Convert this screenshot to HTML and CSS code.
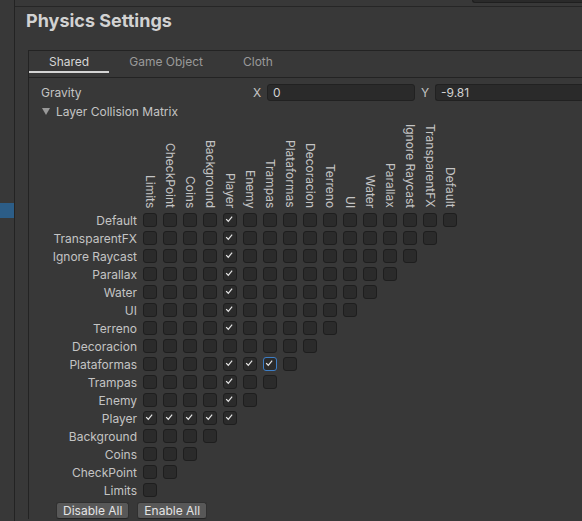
FILE: index.html
```html
<!DOCTYPE html>
<html>
<head>
<meta charset="utf-8">
<link rel="stylesheet" href="styles.css">
</head>
<body>
<div class="app">
  <aside class="sidebar"><div class="sel"></div></aside>
  <main class="main">
    <div class="topbar"><div class="search"></div></div>
    <h1 class="title">Physics Settings</h1>
    <section class="panel">
      <nav class="tabs">
        <div class="tab active">Shared</div>
        <div class="tab">Game Object</div>
        <div class="tab">Cloth</div>
      </nav>
      <div class="content">
        <div class="prop">
          <span class="label">Gravity</span>
          <span class="axis">X</span><span class="field">0</span>
          <span class="axis ay">Y</span><span class="field grow">-9.81</span>
        </div>
        <div class="foldout"><span class="tri"></span>Layer Collision Matrix</div>
        <div class="matrix">
          <div class="mrow head">
            <div class="rl"></div>
            <div class="ch">Limits</div><div class="ch">CheckPoint</div><div class="ch">Coins</div><div class="ch">Background</div><div class="ch">Player</div><div class="ch">Enemy</div><div class="ch">Trampas</div><div class="ch">Plataformas</div><div class="ch">Decoracion</div><div class="ch">Terreno</div><div class="ch">UI</div><div class="ch">Water</div><div class="ch">Parallax</div><div class="ch">Ignore Raycast</div><div class="ch">TransparentFX</div><div class="ch">Default</div>
          </div>
          <div class="mrow"><div class="rl">Default</div><i class="cb"></i><i class="cb"></i><i class="cb"></i><i class="cb"></i><i class="cb on"><svg viewBox="0 0 14 14"><path d="M3.5 7l2.5 2.5 4.5-5.5"/></svg></i><i class="cb"></i><i class="cb"></i><i class="cb"></i><i class="cb"></i><i class="cb"></i><i class="cb"></i><i class="cb"></i><i class="cb"></i><i class="cb"></i><i class="cb"></i><i class="cb"></i></div>
          <div class="mrow"><div class="rl">TransparentFX</div><i class="cb"></i><i class="cb"></i><i class="cb"></i><i class="cb"></i><i class="cb on"><svg viewBox="0 0 14 14"><path d="M3.5 7l2.5 2.5 4.5-5.5"/></svg></i><i class="cb"></i><i class="cb"></i><i class="cb"></i><i class="cb"></i><i class="cb"></i><i class="cb"></i><i class="cb"></i><i class="cb"></i><i class="cb"></i><i class="cb"></i></div>
          <div class="mrow"><div class="rl">Ignore Raycast</div><i class="cb"></i><i class="cb"></i><i class="cb"></i><i class="cb"></i><i class="cb on"><svg viewBox="0 0 14 14"><path d="M3.5 7l2.5 2.5 4.5-5.5"/></svg></i><i class="cb"></i><i class="cb"></i><i class="cb"></i><i class="cb"></i><i class="cb"></i><i class="cb"></i><i class="cb"></i><i class="cb"></i><i class="cb"></i></div>
          <div class="mrow"><div class="rl">Parallax</div><i class="cb"></i><i class="cb"></i><i class="cb"></i><i class="cb"></i><i class="cb on"><svg viewBox="0 0 14 14"><path d="M3.5 7l2.5 2.5 4.5-5.5"/></svg></i><i class="cb"></i><i class="cb"></i><i class="cb"></i><i class="cb"></i><i class="cb"></i><i class="cb"></i><i class="cb"></i><i class="cb"></i></div>
          <div class="mrow"><div class="rl">Water</div><i class="cb"></i><i class="cb"></i><i class="cb"></i><i class="cb"></i><i class="cb on"><svg viewBox="0 0 14 14"><path d="M3.5 7l2.5 2.5 4.5-5.5"/></svg></i><i class="cb"></i><i class="cb"></i><i class="cb"></i><i class="cb"></i><i class="cb"></i><i class="cb"></i><i class="cb"></i></div>
          <div class="mrow"><div class="rl">UI</div><i class="cb"></i><i class="cb"></i><i class="cb"></i><i class="cb"></i><i class="cb on"><svg viewBox="0 0 14 14"><path d="M3.5 7l2.5 2.5 4.5-5.5"/></svg></i><i class="cb"></i><i class="cb"></i><i class="cb"></i><i class="cb"></i><i class="cb"></i><i class="cb"></i></div>
          <div class="mrow"><div class="rl">Terreno</div><i class="cb"></i><i class="cb"></i><i class="cb"></i><i class="cb"></i><i class="cb on"><svg viewBox="0 0 14 14"><path d="M3.5 7l2.5 2.5 4.5-5.5"/></svg></i><i class="cb"></i><i class="cb"></i><i class="cb"></i><i class="cb"></i><i class="cb"></i></div>
          <div class="mrow"><div class="rl">Decoracion</div><i class="cb"></i><i class="cb"></i><i class="cb"></i><i class="cb"></i><i class="cb"></i><i class="cb"></i><i class="cb"></i><i class="cb"></i><i class="cb"></i></div>
          <div class="mrow"><div class="rl">Plataformas</div><i class="cb"></i><i class="cb"></i><i class="cb"></i><i class="cb"></i><i class="cb on"><svg viewBox="0 0 14 14"><path d="M3.5 7l2.5 2.5 4.5-5.5"/></svg></i><i class="cb on"><svg viewBox="0 0 14 14"><path d="M3.5 7l2.5 2.5 4.5-5.5"/></svg></i><i class="cb on focus"><svg viewBox="0 0 14 14"><path d="M3.5 7l2.5 2.5 4.5-5.5"/></svg></i><i class="cb"></i></div>
          <div class="mrow"><div class="rl">Trampas</div><i class="cb"></i><i class="cb"></i><i class="cb"></i><i class="cb"></i><i class="cb on"><svg viewBox="0 0 14 14"><path d="M3.5 7l2.5 2.5 4.5-5.5"/></svg></i><i class="cb"></i><i class="cb"></i></div>
          <div class="mrow"><div class="rl">Enemy</div><i class="cb"></i><i class="cb"></i><i class="cb"></i><i class="cb"></i><i class="cb on"><svg viewBox="0 0 14 14"><path d="M3.5 7l2.5 2.5 4.5-5.5"/></svg></i><i class="cb"></i></div>
          <div class="mrow"><div class="rl">Player</div><i class="cb on"><svg viewBox="0 0 14 14"><path d="M3.5 7l2.5 2.5 4.5-5.5"/></svg></i><i class="cb on"><svg viewBox="0 0 14 14"><path d="M3.5 7l2.5 2.5 4.5-5.5"/></svg></i><i class="cb on"><svg viewBox="0 0 14 14"><path d="M3.5 7l2.5 2.5 4.5-5.5"/></svg></i><i class="cb on"><svg viewBox="0 0 14 14"><path d="M3.5 7l2.5 2.5 4.5-5.5"/></svg></i><i class="cb on"><svg viewBox="0 0 14 14"><path d="M3.5 7l2.5 2.5 4.5-5.5"/></svg></i></div>
          <div class="mrow"><div class="rl">Background</div><i class="cb"></i><i class="cb"></i><i class="cb"></i><i class="cb"></i></div>
          <div class="mrow"><div class="rl">Coins</div><i class="cb"></i><i class="cb"></i><i class="cb"></i></div>
          <div class="mrow"><div class="rl">CheckPoint</div><i class="cb"></i><i class="cb"></i></div>
          <div class="mrow"><div class="rl">Limits</div><i class="cb"></i></div>
        </div>
        <div class="buttons">
          <button class="btn">Disable All</button>
          <button class="btn">Enable All</button>
        </div>
      </div>
    </section>
  </main>
</div>
</body>
</html>
```
FILE: styles.css
```css
html, body {
  margin: 0;
  padding: 0;
  background: #383838;
  overflow: hidden;
  height: 100%;
}
body {
  font-family: Inter, "Noto Sans", sans-serif;
  font-size: 12px;
  color: #c4c4c4;
}
.app {
  display: flex;
  height: 521px;
}
.sidebar {
  width: 14px;
  flex: none;
  border-right: 1px solid #232323;
}
.sel {
  margin-top: 203px;
  height: 15px;
  background: #2c5d87;
}
.main {
  flex: 1;
  min-width: 0;
}
.topbar {
  height: 6px;
  border-bottom: 1px solid #262626;
  display: flex;
  justify-content: flex-end;
}
.search {
  width: 109px;
  height: 2px;
  background: #2a2a2a;
  border: 1px solid #1f1f1f;
  border-top: none;
  border-right: none;
  border-bottom-left-radius: 3px;
}
.title {
  margin: 3px 0 0 0;
  padding-left: 11px;
  font-size: 18px;
  line-height: 22px;
  font-weight: 700;
  color: #d2d2d2;
}
.panel {
  margin: 18px 0 0 13px;
  border-top: 1px solid #232323;
  border-left: 1px solid #232323;
}
.tabs {
  display: flex;
  height: 26px;
  border-bottom: 1px solid #232323;
}
.tab {
  height: 19px;
  line-height: 20px;
  padding: 1px 20px 0;
  border-bottom: 2px solid transparent;
  color: #9a9a9a;
}
.tab.active {
  color: #d6d6d6;
  border-bottom-color: #d4d4d4;
}
.content {
  padding: 4px 0 0 12px;
}
.prop {
  display: flex;
  align-items: center;
  height: 20px;
}
.label {
  width: 212px;
  flex: none;
}
.axis {
  width: 14px;
  flex: none;
}
.ay {
  margin-left: 6px;
}
.field {
  width: 141px;
  flex: none;
  height: 15px;
  line-height: 15px;
  padding-left: 5px;
  background: #2a2a2a;
  border: 1px solid #212121;
  border-radius: 3px;
  color: #d2d2d2;
}
.field.grow {
  flex: 1;
  width: auto;
  border-right: none;
  border-radius: 3px 0 0 3px;
}
.foldout {
  display: flex;
  align-items: center;
  height: 18px;
}
.tri {
  width: 0;
  height: 0;
  margin: 0 6px 0 1px;
  border-left: 4px solid transparent;
  border-right: 4px solid transparent;
  border-top: 7px solid #999999;
}
.mrow {
  display: flex;
  align-items: center;
  gap: 6px;
  height: 18px;
}
.mrow.head {
  height: 91px;
  align-items: flex-end;
}
.rl {
  width: 96px;
  flex: none;
  text-align: right;
  white-space: nowrap;
}
.ch {
  writing-mode: vertical-rl;
  width: 14px;
  line-height: 14px;
  white-space: nowrap;
  padding-bottom: 3px;
  flex: none;
}
.cb {
  display: block;
  width: 12px;
  height: 12px;
  flex: none;
  background: #2b2b2b;
  border: 1px solid #1e1e1e;
  border-radius: 3px;
}
.cb svg {
  display: block;
  width: 12px;
  height: 12px;
}
.cb path {
  fill: none;
  stroke: #e4e4e4;
  stroke-width: 1.4;
  transform: translate(-1px, -1px);
}
.cb.focus {
  border-color: #3d7ec6;
}
.buttons {
  display: flex;
  gap: 8px;
  margin: 3px 0 0 15px;
}
.btn {
  font-family: Inter, "Noto Sans", sans-serif;
  font-size: 12px;
  line-height: 15px;
  height: 17px;
  padding: 0 6px;
  color: #e4e4e4;
  background: #585858;
  border: 1px solid #303030;
  border-bottom-color: #242424;
  border-radius: 3px;
}
```
